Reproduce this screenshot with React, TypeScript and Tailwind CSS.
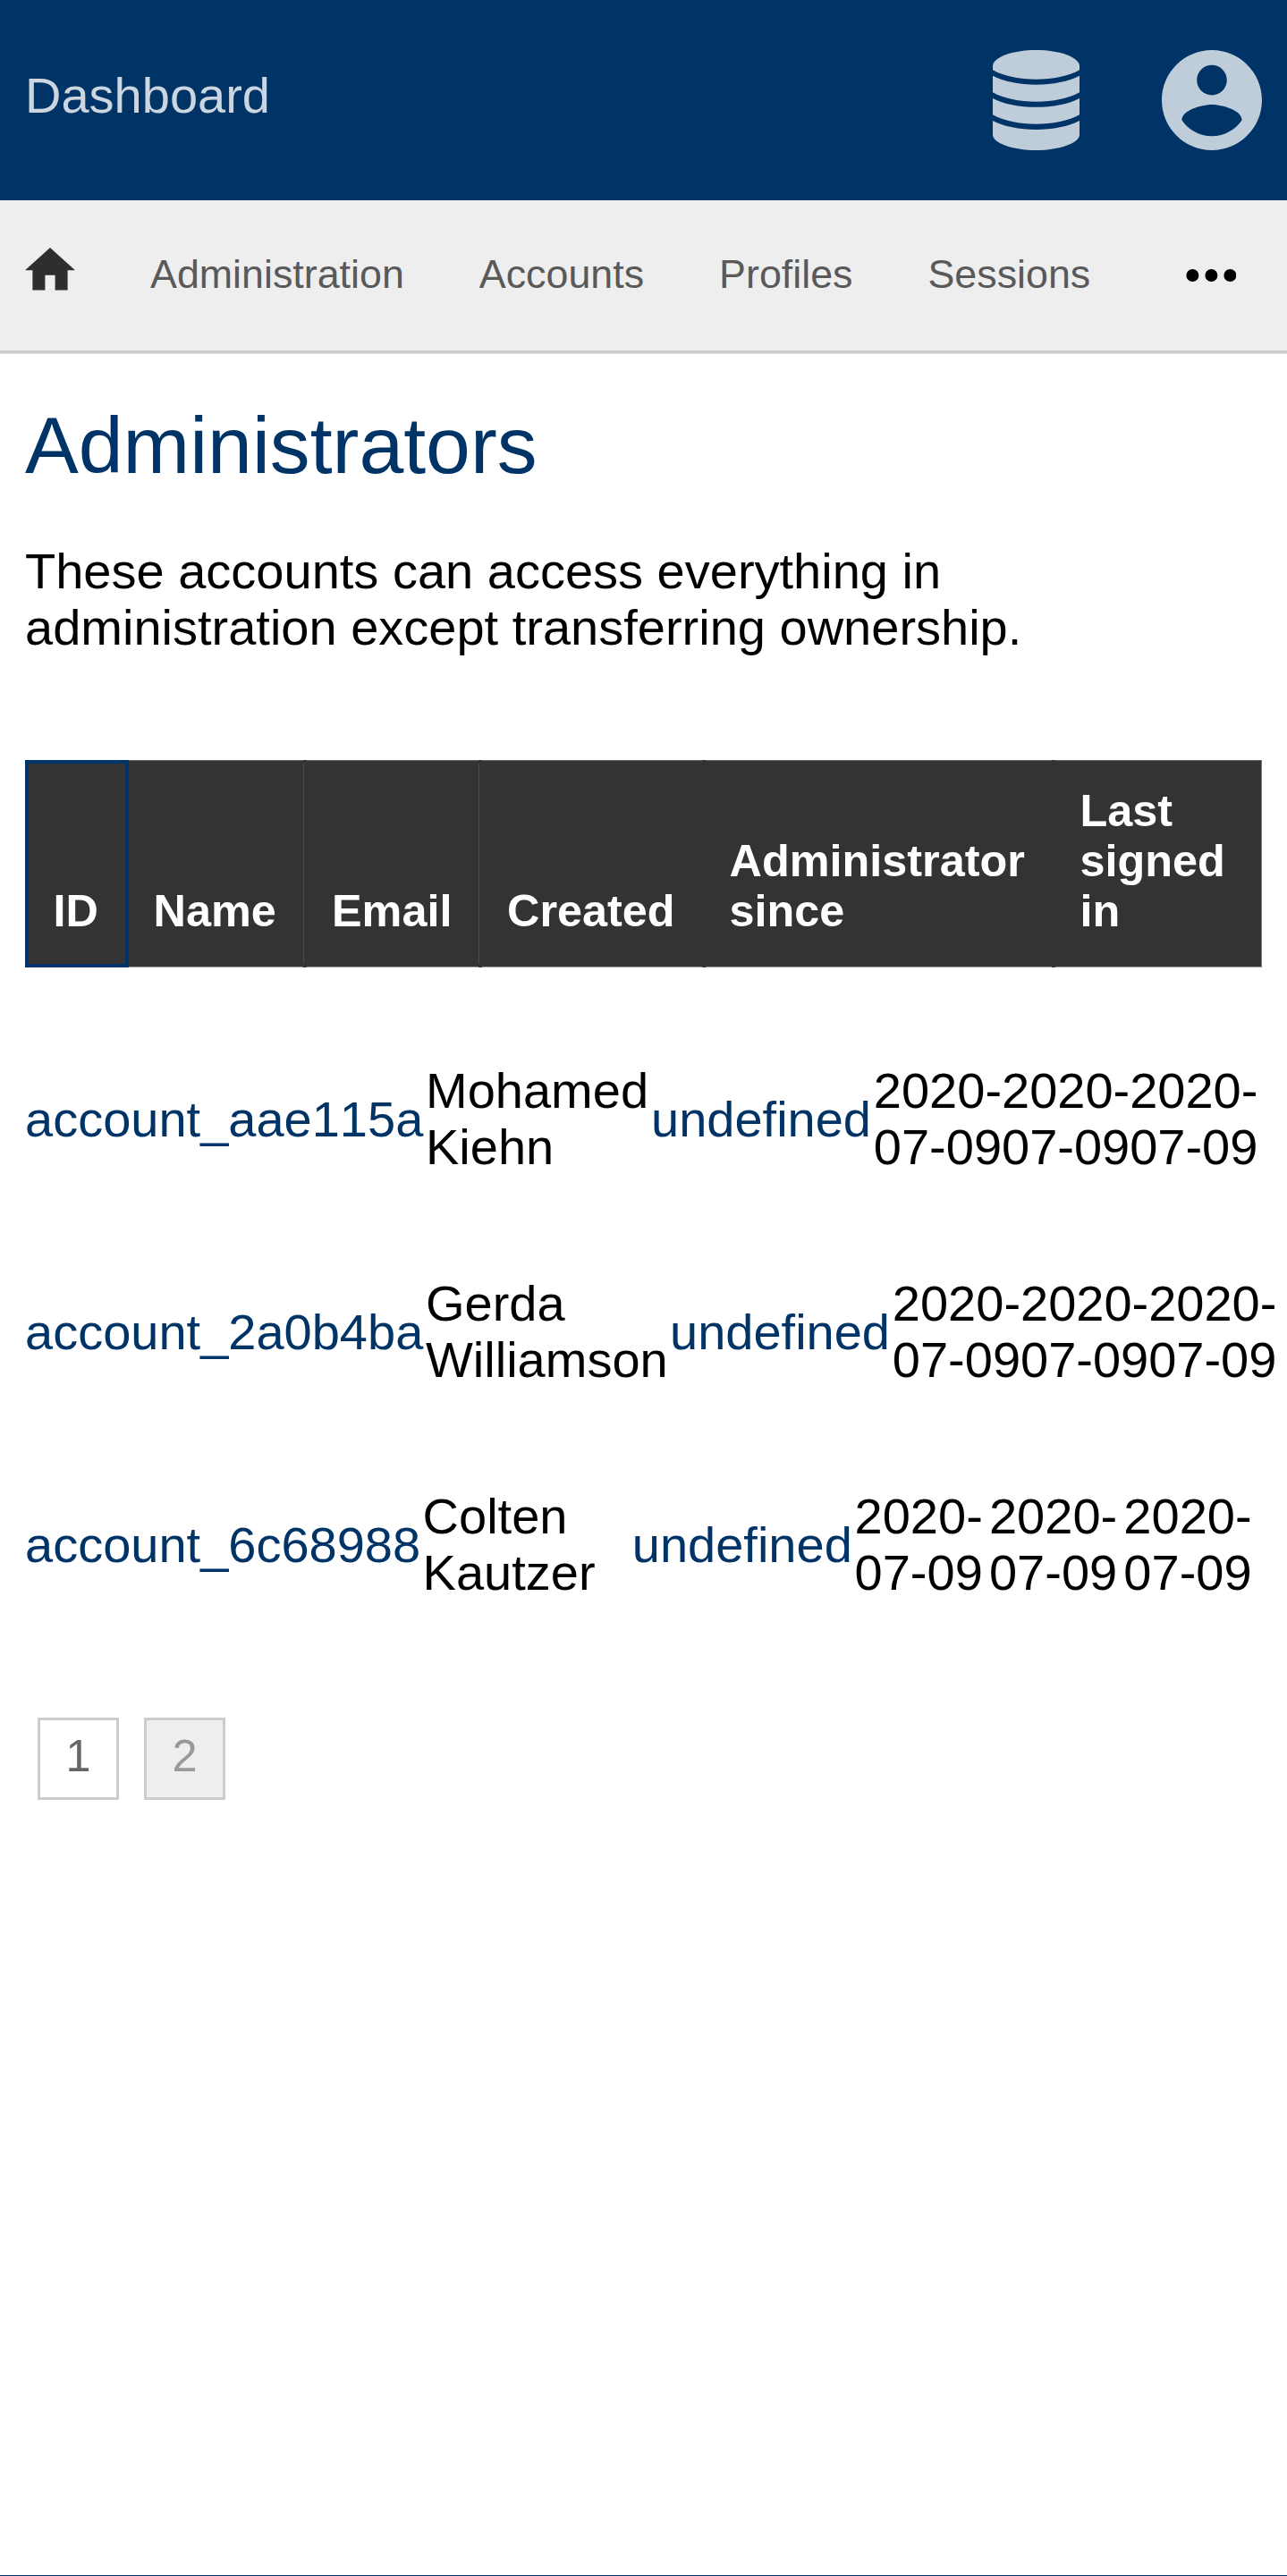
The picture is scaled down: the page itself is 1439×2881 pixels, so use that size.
const navItems = ["Administration", "Accounts", "Profiles", "Sessions"];

const headers = [
  { lines: ["Name"], cell: "w-[200px] -ml-1 pl-[31.5px] border-r border-[#4a4a4a]", joint: true },
  { lines: ["Email"], cell: "w-[196px] pl-[31px] border-r border-[#4a4a4a]", joint: true },
  { lines: ["Created"], cell: "w-[249px] pl-[31px]", joint: true },
  { lines: ["Administrator", "since"], cell: "w-[391px] pl-[30.5px]", joint: true },
  { lines: ["Last", "signed", "in"], cell: "flex-1 pl-[31.5px]", joint: false },
];

const rows = [
  { id: "account_aae115a", name: ["Mohamed", "Kiehn"], cols: "grid-cols-[448px_252px_248.8px_143.2px_143.2px_143.2px]" },
  { id: "account_2a0b4ba", name: ["Gerda", "Williamson"], cols: "grid-cols-[448px_273px_248.8px_143.2px_143.2px_143.2px]" },
  { id: "account_6c68988", name: ["Colten", "Kautzer"], cols: "grid-cols-[444.6px_234.2px_248.8px_150.4px_150.4px_150.4px]" },
];

function DatabaseIcon() {
  return (
    <svg className="h-28 w-[97px]" viewBox="0 0 97 112" fill="currentColor">
      <path d="M0 18C0 8 22 0 48.5 0S97 8 97 18V22.3C85 29 67 32.8 48.5 32.8S12 29 0 22.3Z" />
      <path d="M0 28.7C12 35 30 38.7 48.5 38.7S85 35 97 28.7V47.3C85 54 67 57.8 48.5 57.8S12 54 0 47.3Z" />
      <path d="M0 53.9C12 60.2 30 63.8 48.5 63.8S85 60.2 97 53.9V72.3C85 79 67 82.8 48.5 82.8S12 79 0 72.3Z" />
      <path d="M0 79C12 85.3 30 89 48.5 89S85 85.3 97 79V94.5C97 104 75 112 48.5 112S0 104 0 94.5Z" />
    </svg>
  );
}

function AccountIcon() {
  return (
    <svg className="size-28" viewBox="2 2 20 20" fill="currentColor">
      <path d="M12 2C6.48 2 2 6.48 2 12s4.48 10 10 10 10-4.48 10-10S17.52 2 12 2zm0 3c1.66 0 3 1.34 3 3s-1.34 3-3 3-3-1.34-3-3 1.34-3 3-3zm0 14.2c-2.5 0-4.71-1.28-6-3.22.03-1.99 4-3.08 6-3.08 1.99 0 5.97 1.09 6 3.08-1.29 1.94-3.5 3.22-6 3.22z" />
    </svg>
  );
}

export default function App() {
  return (
    <div className="flex h-[2881px] w-[1439px] flex-col overflow-hidden border-b border-[#003366] bg-white font-['Liberation_Sans',Arial,sans-serif] text-[56px] leading-[63px] text-black">
      <header className="flex h-56 shrink-0 items-start bg-[#003366] px-7">
        <a className="mt-[75px] text-[#ccd6e0]">Dashboard</a>
        <div className="mt-14 ml-auto flex gap-[92px] text-[#bfccd9]">
          <DatabaseIcon />
          <AccountIcon />
        </div>
      </header>

      <nav className="flex h-[171px] shrink-0 items-start border-b-[3px] border-[#ccc] bg-[#eee] pl-7 text-[44.8px] leading-[52px] text-[#595959]">
        <svg className="mt-[53.2px] h-[47.6px] w-14 text-[#2e2e2e]" viewBox="2 3 20 17" fill="currentColor">
          <path d="M10 20v-6h4v6h5v-8h3L12 3 2 12h3v8z" />
        </svg>
        <div className="mt-14 ml-[84px] flex gap-[84px]">
          {navItems.map((item) => (
            <a key={item}>{item}</a>
          ))}
        </div>
        <svg className="mt-[77px] mr-[57px] ml-auto h-3.5 w-14 text-black" viewBox="0 0 56 14" fill="currentColor">
          <circle cx="7.4" cy="7" r="7" />
          <circle cx="28.4" cy="7" r="7" />
          <circle cx="49.4" cy="7" r="7" />
        </svg>
      </nav>
      <div className="h-px shrink-0 bg-[#e5e5e5]" />

      <main className="px-7 pt-[52px]">
        <h1 className="text-[89.6px] leading-[100px] text-[#003366]">Administrators</h1>
        <p className="mt-[59px]">
          These accounts can access everything in
          <br />
          administration except transferring ownership.
        </p>

        <div className="mt-[117px] flex h-[232px] w-[1383px] items-stretch border-t border-r border-b border-t-[#666] border-r-[#777] border-b-[#999] bg-[#333] text-[50.4px] leading-[56px] font-bold text-white">
          <div className="-my-px flex w-[116px] items-end border-4 border-[#003366] pb-[31px] pl-[27.5px]">ID</div>
          {headers.map((h) => (
            <div key={h.lines[0]} className={`${h.cell} relative flex flex-col justify-end pb-[34px]`}>
              {h.lines.map((line) => (
                <span key={line}>{line}</span>
              ))}
              {h.joint && (
                <>
                  <i className="absolute -top-px -right-1 h-1 w-1 bg-[#333]" />
                  <i className="absolute -right-1 -bottom-px h-1 w-1 bg-[#333]" />
                </>
              )}
            </div>
          ))}
        </div>

        <div className="mt-[50px]">
          {rows.map((row) => (
            <div key={row.id} className={`grid h-[238px] items-center whitespace-nowrap ${row.cols}`}>
              <a className="text-[#003366] [font-kerning:none]">{row.id}</a>
              <span>
                {row.name[0]}
                <br />
                {row.name[1]}
              </span>
              <a className="text-[#003366]">undefined</a>
              {[0, 1, 2].map((d) => (
                <span key={d}>
                  2020-
                  <br />
                  07-09
                </span>
              ))}
            </div>
          ))}
        </div>

        <div className="mt-[75px] ml-3.5 flex gap-7 text-[50.4px] leading-[56px]">
          <a className="h-[92px] w-[91px] border-[3.5px] border-[#ccc] pt-3 text-center text-[#666]">1</a>
          <a className="h-[92px] w-[91px] border-[3.5px] border-[#ccc] bg-[#eee] pt-3 text-center text-[#999]">2</a>
        </div>
      </main>
    </div>
  );
}
